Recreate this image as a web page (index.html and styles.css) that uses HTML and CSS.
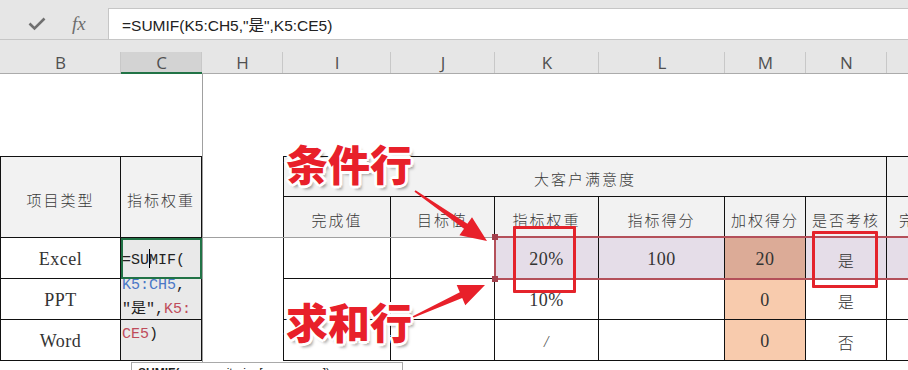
FILE: index.html
```html
<!DOCTYPE html>
<html lang="zh-CN">
<head>
    <meta charset="UTF-8">
    <title>SUMIF 条件行 求和行</title>
    <link rel="stylesheet" href="styles.css">
</head>
<body>
<div class="app">

    <!-- formula bar -->
    <div class="formula-bar">
        <div class="fb-tools">
            <svg class="fb-check" width="18" height="14" viewBox="0 0 18 14">
                <path d="M1.5 6.5 L6.5 11.5 L16.5 1.5" fill="none" stroke="#707070" stroke-width="2.6"/>
            </svg>
            <span class="fb-fx">fx</span>
        </div>
        <div class="fb-input">=SUMIF(K5:CH5,"是",K5:CE5)</div>
    </div>

    <!-- sheet grid -->
    <div class="sheet">
        <div class="colhead">B</div>
        <div class="colhead current">C</div>
        <div class="colhead">H</div>
        <div class="colhead">I</div>
        <div class="colhead">J</div>
        <div class="colhead">K</div>
        <div class="colhead">L</div>
        <div class="colhead">M</div>
        <div class="colhead">N</div>
        <div class="colhead"></div>

        <div class="full"></div>

        <!-- row 3 -->
        <div class="cell th t tl tt r2">项目类型</div>
        <div class="cell th t tt r2">指标权重</div>
        <div class="cell r2"></div>
        <div class="cell th t tl tt c6">大客户满意度</div>
        <div class="cell th t tt"></div>

        <!-- row 4 -->
        <div class="cell th t tl">完成值</div>
        <div class="cell th t">目标值</div>
        <div class="cell th t">指标权重</div>
        <div class="cell th t">指标得分</div>
        <div class="cell th t">加权得分</div>
        <div class="cell th t">是否考核</div>
        <div class="cell th t left">完成值</div>

        <!-- row 5 -->
        <div class="cell t tl">Excel</div>
        <div class="cell shade active">
            <div class="editor">=SU<span class="caret"></span>MIF(<br><span class="ref-blue">K5:CH5</span>,<br>"是",<span class="ref-red">K5:</span><br><span class="ref-red">CE5</span>)</div>
        </div>
        <div class="cell"></div>
        <div class="cell t tl"></div>
        <div class="cell t"></div>
        <div class="cell t hl">20%</div>
        <div class="cell t hl">100</div>
        <div class="cell t hl-score">20</div>
        <div class="cell t hl cjk">是</div>
        <div class="cell t hl"></div>

        <!-- row 6 -->
        <div class="cell t tl">PPT</div>
        <div class="cell t shade"></div>
        <div class="cell"></div>
        <div class="cell t tl"></div>
        <div class="cell t"></div>
        <div class="cell t">10%</div>
        <div class="cell t"></div>
        <div class="cell t score">0</div>
        <div class="cell t cjk">是</div>
        <div class="cell t"></div>

        <!-- row 7 -->
        <div class="cell t tl">Word</div>
        <div class="cell t shade"></div>
        <div class="cell"></div>
        <div class="cell t tl"></div>
        <div class="cell t"></div>
        <div class="cell t slash">/</div>
        <div class="cell t"></div>
        <div class="cell t score">0</div>
        <div class="cell t cjk">否</div>
        <div class="cell t"></div>

        <div class="full"></div>
    </div>

    <!-- overlays: freeze panes, range highlight, notes -->
    <div class="freeze-v"></div>
    <div class="freeze-h"></div>
    <div class="range"></div>
    <div class="handle handle-top"></div>
    <div class="handle handle-bottom"></div>
    <div class="mark mark-weight"></div>
    <div class="mark mark-check"></div>

    <svg class="arrows" width="908" height="370" viewBox="0 0 908 370">
        <polygon points="414.5,191.7 464,228.7 459.4,235.2 487,241 472,217.2 467.4,223.7 415.5,190.3" fill="#e8202a"/>
        <polygon points="412.7,316.3 459.8,292.3 456.7,285 485,285 465.3,305.2 462.2,297.9 413.3,317.7" fill="#e8202a"/>
    </svg>
    <div class="note note-cond">条件行</div>
    <div class="note note-sum">求和行</div>

    <div class="tooltip"><b>SUMIF(</b>range, criteria, [sum_range])</div>
</div>
</body>
</html>
```

FILE: styles.css
```css
body {
    margin: 0;
    background-color: #fff;
    font-family: "Liberation Sans", "Noto Sans CJK SC", sans-serif;
}
.app {
    position: relative;
    width: 908px;
    height: 370px;
    overflow: hidden;
    background-color: #fff;
}

/* formula bar */
.formula-bar {
    display: flex;
    height: 40px;
    box-sizing: border-box;
    padding-top: 8px;
    background-color: #e6e6e6;
    border-bottom: 1px solid #c6c6c6;
}
.fb-tools {
    display: flex;
    align-items: center;
    width: 105px;
    box-sizing: border-box;
    padding-left: 28px;
    gap: 26px;
}
.fb-fx {
    font-family: "Liberation Serif", serif;
    font-style: italic;
    font-size: 19px;
    color: #6d6d6d;
}
.fb-input {
    flex: 1;
    display: flex;
    align-items: center;
    margin-left: 3px;
    padding-left: 13px;
    background-color: #fff;
    border-top: 1px solid #c6c6c6;
    border-left: 1px solid #c6c6c6;
    font-size: 15.5px;
    color: #222;
}

/* sheet */
.sheet {
    display: grid;
    grid-template-columns: 121px 81px 81px 108px 104px 104px 126px 81px 81px 110px;
    grid-template-rows: 34px 82px 41px 41px 41px 41px 41px 30px;
}
.colhead {
    position: relative;
    display: flex;
    align-items: flex-end;
    justify-content: center;
    box-sizing: border-box;
    background-color: #e6e6e6;
    border-bottom: 1px solid #ababab;
    font-family: "Open Sans", sans-serif;
    font-size: 17px;
    line-height: 20px;
    color: #505050;
}
.colhead::after {
    content: "";
    position: absolute;
    right: 0;
    top: 12px;
    bottom: 0;
    width: 1px;
    background-color: #c8c8c8;
}
.colhead.current {
    background: linear-gradient(#e6e6e6 0 12px, #d3d3d3 12px);
    border-bottom: 2px solid #217346;
    line-height: 19px;
}
.full {
    grid-column: 1 / -1;
}

.cell {
    display: flex;
    align-items: center;
    justify-content: center;
    box-sizing: border-box;
    padding-top: 3px;
    white-space: nowrap;
    overflow: hidden;
    font-family: "Liberation Serif", "Noto Sans CJK SC", serif;
    font-size: 18px;
    letter-spacing: 0.5px;
    color: #333;
}
.t {
    border-right: 1px solid #111;
    border-bottom: 1px solid #111;
}
.tl {
    border-left: 1px solid #111;
}
.tt {
    border-top: 1px solid #111;
}
.r2 {
    grid-row: span 2;
}
.c6 {
    grid-column: span 6;
}
.th {
    background-color: #f2f2f2;
    padding-top: 4px;
    font-family: "Noto Sans CJK SC", sans-serif;
    font-size: 15px;
    font-weight: 300;
    letter-spacing: 2px;
    color: #3a3a3a;
}
.left {
    justify-content: flex-start;
    padding-left: 12px;
}
.cjk {
    font-family: "Noto Sans CJK SC", sans-serif;
    font-size: 16px;
    font-weight: 300;
}
.slash {
    font-size: 16px;
    font-style: italic;
    color: #555;
}
.shade {
    background-color: #e9e9e9;
}
.hl {
    background-color: #e5dde8;
}
.hl-score {
    background-color: #dcab97;
}
.score {
    background-color: #f8cbad;
}

/* cell being edited */
.active {
    position: relative;
    overflow: visible;
    border: 2px solid #217346;
}
.editor {
    position: absolute;
    left: -1px;
    top: 9px;
    z-index: 2;
    font-family: "Liberation Mono", "Noto Sans CJK SC", monospace;
    font-size: 15px;
    line-height: 24.5px;
    letter-spacing: 0;
    color: #222;
    white-space: nowrap;
}
.caret {
    display: inline-block;
    width: 1px;
    height: 19px;
    margin: 0 -0.5px;
    vertical-align: -4px;
    background-color: #000;
}
.ref-blue {
    color: #4a77c6;
}
.ref-red {
    color: #bf4b5a;
}

/* overlays */
.freeze-v {
    position: absolute;
    left: 202px;
    top: 74px;
    width: 1px;
    height: 296px;
    background-color: #a0a0a0;
}
.freeze-h {
    position: absolute;
    left: 202px;
    top: 237px;
    width: 293px;
    height: 1px;
    background-color: #a0a0a0;
}
.range {
    position: absolute;
    left: 494px;
    top: 236px;
    width: 430px;
    height: 44px;
    box-sizing: border-box;
    border: 2px solid #b4505a;
}
.handle {
    position: absolute;
    left: 492px;
    width: 6px;
    height: 6px;
    background-color: #a3404d;
}
.handle-top {
    top: 234px;
}
.handle-bottom {
    top: 276px;
}
.mark {
    position: absolute;
    box-sizing: border-box;
    border: 3px solid #e4232b;
    border-radius: 1px;
}
.mark-weight {
    left: 513px;
    top: 226px;
    width: 63px;
    height: 67px;
}
.mark-check {
    left: 812px;
    top: 231px;
    width: 66px;
    height: 57px;
}
.arrows {
    position: absolute;
    left: 0;
    top: 0;
}
.note {
    position: absolute;
    left: 286px;
    font-family: "Noto Sans CJK SC", sans-serif;
    font-size: 42px;
    font-weight: 900;
    line-height: 42px;
    color: #e8202a;
    text-shadow: 3px 0 #fff, -3px 0 #fff, 0 3px #fff, 0 -3px #fff,
        2px 2px #fff, -2px -2px #fff, 2px -2px #fff, -2px 2px #fff,
        3px 4px 3px rgba(0, 0, 0, 0.35);
}
.note-cond {
    top: 142px;
}
.note-sum {
    top: 300px;
}
.tooltip {
    position: absolute;
    left: 131px;
    top: 362px;
    width: 272px;
    height: 30px;
    box-sizing: border-box;
    padding: 3px 6px;
    background-color: #fff;
    border: 1px solid #a9a9a9;
    font-size: 12px;
    color: #222;
}
```
